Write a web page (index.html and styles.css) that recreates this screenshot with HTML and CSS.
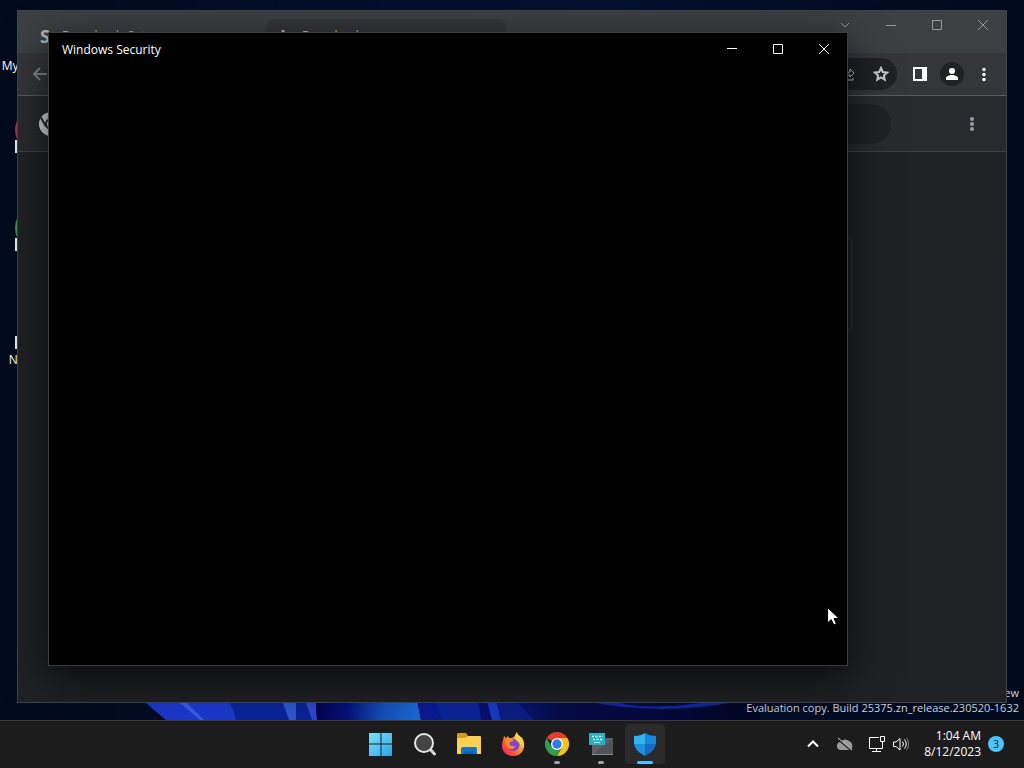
FILE: index.html
```
<!DOCTYPE html>
<html lang="en">
<head>
    <meta charset="UTF-8">
    <title>Desktop</title>
    <link rel="stylesheet" href="styles.css">
</head>
<body>
<main id="desktop">
    <svg class="wallpaper" viewBox="0 0 1024 60" preserveAspectRatio="none" aria-hidden="true">
        <defs>
            <linearGradient id="glow"><stop offset="0" stop-color="#02034c"/><stop offset="0.3" stop-color="#05107a"/><stop offset="0.65" stop-color="#1450b8"/><stop offset="1" stop-color="#1c6bd8"/></linearGradient>
            <linearGradient id="fade"><stop offset="0" stop-color="#071a86"/><stop offset="0.25" stop-color="#040c48"/><stop offset="0.7" stop-color="#030838"/><stop offset="1" stop-color="#020722"/></linearGradient>
        </defs>
        <path fill="#1c38cc" d="M100 0L146 43L166 60H240V0z"/>
        <path fill="#3a5ce0" d="M165 30L180 43L200 60H204L190 46L172 30z"/>
        <path fill="#0b2398" d="M215 20Q232 40 236 60H300V20z"/>
        <path fill="#2f55cf" d="M279 30L283 43L289 60H297L296 43V30z"/>
        <path fill="#0a2294" d="M296 30V60H312L306 30z"/>
        <path fill="#2a48cc" d="M303 30L306 43L312 60H317L315 30z"/>
        <path fill="url(#glow)" d="M315 30L317 60H421L415 30z"/>
        <path fill="#0a1a92" d="M415 30L421 60H441L433 30z"/>
        <path fill="#0b2496" d="M433 30L441 60H484L476 30z"/>
        <path fill="#06106c" d="M476 30L481 60H493L485 30z"/>
        <path fill="#1738c4" d="M484 30L492 60H501L494 30z"/>
        <path fill="url(#fade)" d="M494 30L501 60H760V30z"/>
        <path fill="#0b1d80" d="M496 40L502 60H534L516 40z"/>
        <path fill="#10269a" d="M590 42Q660 56 735 42L700 43Q650 50 620 43z"/>
    </svg>
    <ul class="shortcuts">
        <li><i class="pic"></i>My Computer</li>
        <li><i class="pic red"></i>Firefox</li>
        <li><i class="pic green"></i>Chrome</li>
        <li><i class="pic pale"></i>Notepad++</li>
    </ul>
    <p class="watermark">Windows 11 Pro Insider Preview<br>Evaluation copy. Build 25375.zn_release.230520-1632</p>

    <section class="window browser">
        <div class="tabs">
            <div class="tab"><b>S</b><span>Downloads Set</span><i>×</i></div>
            <div class="tab active"><b>L</b><span>Downloads</span><i>×</i></div>
            <button class="plus" aria-label="New tab">+</button>
            <div class="controls">
                <button aria-label="Search tabs"><svg width="12" height="12"><path d="M2 4l4 4 4-4"/></svg></button>
                <button aria-label="Minimize"><svg width="12" height="12"><path d="M1 6.500h10"/></svg></button>
                <button aria-label="Maximize"><svg width="12" height="12"><path d="M1.500 1.500h9v9h-9z"/></svg></button>
                <button aria-label="Close"><svg width="12" height="12"><path d="M1 1l10 10M11 1L1 11"/></svg></button>
            </div>
        </div>
        <div class="toolbar">
            <button aria-label="Back"><svg class="back" width="16" height="16"><path d="M15 8H2M8 2L2 8l6 6"/></svg></button>
            <div class="address">
                <button aria-label="Share"><svg width="16" height="16"><path d="M3 7v7h9v-2M5 10c0-3 2-4 4-4V3l4 4-4 4V9C7 9 6 9 5 10z"/></svg></button>
                <button aria-label="Bookmark"><svg class="star" width="16" height="16"><path d="M8 2l1.800 4 4.300.5-3.200 2.900.9 4.300L8 11.500l-3.800 2.200.9-4.300L1.900 6.500 6.200 6z"/></svg></button>
            </div>
            <button aria-label="Side panel"><svg width="16" height="16"><path class="white" fill-rule="evenodd" d="M1 1h14v14H1zM3 3v10h7V3z"/></svg></button>
            <button class="profile" aria-label="Profile"><svg width="16" height="16"><path class="white" d="M8 2a3 3 0 100 6 3 3 0 000-6zM2 14v-2c0-2 4-3 6-3s6 1 6 3v2z"/></svg></button>
            <button aria-label="Menu"><svg width="16" height="16"><g class="white"><circle cx="8" cy="3.500" r="1.700"/><circle cx="8" cy="8.500" r="1.700"/><circle cx="8" cy="13.500" r="1.700"/></g></svg></button>
        </div>
        <div class="page-head">
            <svg class="logo" width="24" height="24" viewBox="0 0 24 24"><circle cx="12" cy="12" r="12" fill="#dadce0"/><path d="M12 6.500h11M7.200 14.800L1.700 5.200M16.800 14.800L11.300 24" stroke="#292a2d" stroke-width="2"/><circle cx="12" cy="12" r="5" fill="#dadce0" stroke="#292a2d" stroke-width="2"/></svg>
            <input type="search" aria-label="Search">
            <button aria-label="More actions"><svg width="16" height="16"><g class="grey"><circle cx="8" cy="3" r="2"/><circle cx="8" cy="8" r="2"/><circle cx="8" cy="13" r="2"/></g></svg></button>
        </div>
        <div class="page-body"><div class="card"></div></div>
    </section>

    <section class="window security">
        <header>
            <h1>Windows Security</h1>
            <div class="controls">
                <button aria-label="Minimize"><svg width="12" height="12"><path d="M1 5.500h10"/></svg></button>
                <button aria-label="Maximize"><svg width="12" height="12"><path d="M1.500 1.500h9v9h-9z"/></svg></button>
                <button aria-label="Close"><svg width="12" height="12"><path d="M1 1l10 10M11 1L1 11"/></svg></button>
            </div>
        </header>
    </section>
    <svg class="cursor" width="13" height="19" aria-hidden="true"><path fill="#fff" stroke="#000" d="M.5.5V16l3.700-3.400 2.600 5.400 2.600-1.200L7 11.500h5z"/></svg>
</main>

<footer id="taskbar">
    <nav>
        <button aria-label="Start"><svg width="24" height="24"><defs><linearGradient id="win" x2="1" y2="1"><stop offset="0" stop-color="#7be3fb"/><stop offset="1" stop-color="#2aa3e8"/></linearGradient></defs><path fill="url(#win)" d="M0 1h11.500v10.500H0zM12.500 1H23v10.500H12.500zM0 12.500h11.500V24H0zM12.500 12.500H23V24H12.500z"/></svg></button>
        <button aria-label="Search"><svg width="24" height="24"><path d="M17 17l4.500 5" stroke="#d8d8d8" stroke-width="3" stroke-linecap="round"/><circle cx="11" cy="11" r="9" fill="#444" stroke="#e6e6e6" stroke-width="2"/></svg></button>
        <button aria-label="File Explorer"><svg width="26" height="24"><path fill="#d39a1c" d="M1 2q0-1 1-1h8l2 3v4H1z"/><path fill="#fcd053" d="M1 6h8l3-2h12q1 0 1 1v17H1z"/><path fill="#1374c4" d="M5 22v-5q0-2 2-2h12q2 0 2 2v5z"/><path fill="#0f62ac" d="M8 19h10v3H8z"/></svg></button>
        <button aria-label="Firefox"><svg width="24" height="24"><defs><linearGradient id="fox" x1="1" y1="0" x2="0" y2="1"><stop offset="0" stop-color="#fff04a"/><stop offset="0.45" stop-color="#ff9626"/><stop offset="0.75" stop-color="#ff4242"/><stop offset="1" stop-color="#e6237b"/></linearGradient></defs><path fill="url(#fox)" d="M16 0c0 3 3 4 5 6 5 8 1 18-9 18C3 24-1 16 2 8l1-4 2 2 2-2 1 2c3 0 4 0 5-1z"/><circle cx="12.500" cy="13" r="6" fill="#7b45d8"/><path fill="#ff8a22" d="M4 9q5-4 9 0-4 0-5 3 2 3 7 2-3 5-8 2-3-3-3-7z"/><path fill="#ffd33d" d="M16 0c0 3 3 4 5 6q3 6 1 10-3-5-7-8-2-4 1-8z"/></svg></button>
        <button class="open" aria-label="Chrome"><svg width="24" height="24"><path fill="#e33b2e" d="M12 12L1.600 6A12 12 0 0122.400 6z"/><path fill="#fbc116" d="M12 6h10.400A12 12 0 0112 24l5-9z"/><path fill="#2da04e" d="M1.600 6A12 12 0 0012 24l5.200-9L12 12 6.800 15z"/><circle cx="12" cy="12" r="6" fill="#fff"/><circle cx="12" cy="12" r="4.700" fill="#2d7de8"/></svg></button>
        <button class="open" aria-label="Remote input"><svg width="26" height="24"><path fill="#5e6267" d="M4 6h21v17H4z"/><path fill="#505358" d="M4 23L25 6v17z"/><path fill="#8a8d90" d="M4 22h21v1H4z"/><path fill="#24b0c5" d="M1 1h16v12H1z"/><path stroke="#d9fbff" stroke-width="1.500" stroke-dasharray="2 1.500" d="M4 4.500h11M5 7.500h10"/><path fill="#d9fbff" d="M6 10h6v1H6z"/></svg></button>
        <button class="open current" aria-label="Windows Security"><svg width="24" height="24"><path fill="#35b2f2" d="M12 1Q8 4 1 4v8h11z"/><path fill="#1687dc" d="M12 1q4 3 11 3v8H12z"/><path fill="#1e90e0" d="M1 12h11v12Q2 19 1 12z"/><path fill="#126cc0" d="M23 12H12v12q10-5 11-12z"/></svg></button>
    </nav>
    <div class="tray">
        <button aria-label="Show hidden icons"><svg width="16" height="16"><path d="M3 10.500l5-5 5 5" stroke-width="2"/></svg></button>
        <button aria-label="OneDrive"><svg width="18" height="16"><path fill="#9a9a9a" stroke="none" d="M5 14a4 4 0 010-8 5 5 0 018-1 5 5 0 011 9z"/><path d="M2 3l14 12" stroke="#1c1c1c" stroke-width="2"/><path d="M2 2l14 12" stroke="#ddd"/></svg></button>
        <button class="net" aria-label="Network"><svg width="18" height="18"><path d="M11 2.500H1.500v11h13V9M8.500 14v3M4 16.500h9M12.500 1.500h4v5h-4zM14.500 7v3"/></svg></button>
        <button class="sound" aria-label="Volume"><svg width="18" height="16"><path d="M1.500 6v4.500H4l4 3.500V2.500L4 6zM10.500 5.500q2 2.500 0 5M12.500 3.500q3.500 4.500 0 9"/><path stroke="#777" d="M14.500 2q4.500 6 0 12"/></svg></button>
        <time datetime="2023-08-12T01:04">1:04 AM<br>8/12/2023</time>
        <span class="count">3</span>
    </div>
</footer>
</body>
</html>
```
FILE: styles.css
```
* {
    box-sizing: border-box;
    margin: 0;
    padding: 0;
}

body {
    display: flex;
    flex-direction: column;
    height: 100vh;
    overflow: hidden;
    font: 12px/16px "Open Sans", "Noto Sans", sans-serif;
    color: #fff;
}

button {
    display: flex;
    align-items: center;
    justify-content: center;
    border: 0;
    background: none;
    color: inherit;
    font: inherit;
}

svg {
    flex: none;
    fill: none;
}

i {
    font-style: normal;
}

#desktop {
    position: relative;
    flex: 1;
    overflow: hidden;
    background: linear-gradient(90deg, #010b1c, #02102e 40%, #02112f 60%, #010a1d);
}

.wallpaper {
    position: absolute;
    left: 0;
    bottom: 0;
    width: 100%;
    height: 60px;
}

/* desktop icons */
.shortcuts {
    width: 80px;
    padding-top: 8px;
    list-style: none;
    text-align: center;
}

.shortcuts li {
    height: 98px;
    white-space: nowrap;
}

.pic {
    display: block;
    position: relative;
    width: 50px;
    height: 48px;
    margin: 0 auto 2px;
    border-radius: 50%;
}

.pic.red {
    background: #b02a4a;
}

.pic.green {
    background: #3d8a55;
}

.pic.pale {
    width: 46px;
    border-radius: 0;
    background: #777d88;
}

.pic.red::after,
.pic.green::after,
.pic.pale::after {
    content: "";
    position: absolute;
    left: 0;
    top: 34px;
    width: 13px;
    height: 13px;
    background: #e6e8ec;
}

.pic.pale::after {
    left: -2px;
}

.watermark {
    position: absolute;
    right: 5px;
    bottom: 5px;
    font-size: 11px;
    line-height: 15px;
    text-align: right;
    color: #d0d3da;
}

/* windows */
.window {
    position: absolute;
    overflow: hidden;
}

.browser {
    inset: 10px 17px 17px 17px;
    display: flex;
    flex-direction: column;
    border: 1px solid #414548;
    background: #202124;
}

.security {
    inset: 32px 176px 54px 48px;
    border: 1px solid #3c3c3c;
    background: #000;
    box-shadow: 0 12px 40px rgba(0, 0, 0, 0.7);
}

.security header {
    display: flex;
    align-items: center;
    justify-content: space-between;
    height: 32px;
    padding-left: 13px;
}

h1 {
    padding-top: 2px;
    font-size: 12px;
    font-weight: 400;
}

.controls {
    display: flex;
}

.controls button {
    width: 46px;
    height: 28px;
}

.controls svg {
    stroke: #fff;
}

.tabs {
    display: flex;
    height: 42px;
    padding-left: 8px;
    background: #3c4043;
}

.tabs .controls {
    margin-left: auto;
}

.tabs .controls svg {
    stroke: #96999b;
}

.tab {
    display: flex;
    align-items: center;
    width: 240px;
    margin-top: 8px;
    padding: 0 12px 0 14px;
    color: #b8babd;
}

.tab b {
    width: 22px;
    font-size: 18px;
}

.tab i {
    margin-left: auto;
}

.active {
    border-radius: 8px 8px 0 0;
    background: #35363a;
}

.plus {
    align-self: flex-end;
    width: 36px;
    height: 34px;
    font-size: 18px;
}

.toolbar {
    display: flex;
    align-items: center;
    height: 43px;
    padding-right: 6px;
    border-bottom: 1px solid #595b5e;
    background: #35363a;
}

.toolbar button {
    width: 32px;
    height: 32px;
}

.toolbar > button:first-child {
    width: 44px;
}

.toolbar svg {
    stroke: #c5c7ca;
}

.toolbar .star {
    stroke-width: 2;
}

.back path {
    stroke: #85888b;
    stroke-width: 2;
}

.white {
    fill: #fff;
    stroke: none;
}

.grey {
    fill: #9aa0a6;
    stroke: none;
}

.address {
    display: flex;
    flex: 1;
    justify-content: flex-end;
    margin-right: 7px;
    border-radius: 17px;
    background: #202124;
}

.toolbar .profile {
    width: 24px;
    height: 24px;
    margin: 0 4px;
    border-radius: 50%;
    background: #202124;
}

.page-head {
    display: flex;
    align-items: center;
    height: 56px;
    padding: 0 18px 0 21px;
    border-bottom: 1px solid #3e4043;
    background: #292a2d;
}

.page-head input {
    flex: 1;
    height: 40px;
    margin: 0 65px 0 120px;
    border: 0;
    border-radius: 20px;
    background: #202124;
}

.page-head button {
    width: 32px;
    height: 32px;
}

.page-body {
    flex: 1;
    padding-top: 84px;
}

.card {
    width: 680px;
    height: 96px;
    margin: 0 auto;
    border: 1px solid #34363a;
    border-radius: 4px;
}

.cursor {
    position: absolute;
    left: 827px;
    top: 607px;
}

/* taskbar */
#taskbar {
    display: grid;
    grid-template-columns: 1fr auto 1fr;
    align-items: center;
    height: 48px;
    padding-bottom: 2px;
    border-top: 1px solid #38393b;
    background: #1c1c1c;
}

nav {
    display: flex;
    grid-column: 2;
    gap: 4px;
    padding-left: 2px;
}

nav button {
    position: relative;
    width: 40px;
    height: 40px;
    border-radius: 4px;
}

.open::after {
    content: "";
    position: absolute;
    bottom: 0;
    width: 6px;
    height: 3px;
    border-radius: 2px;
    background: #a0a0a0;
}

.current {
    background: #2a2a2a;
}

.current::after {
    width: 16px;
    background: #4cc2ff;
}

.tray {
    display: flex;
    align-items: center;
    justify-content: flex-end;
    padding-right: 20px;
}

.tray button {
    width: 32px;
    height: 32px;
}

.tray button.sound,
.tray button.net {
    width: 24px;
}

.tray button.net {
    margin-left: 4px;
}

.tray svg {
    stroke: #fff;
}

time {
    width: 68px;
    text-align: right;
}

.count {
    width: 16px;
    height: 16px;
    margin-left: 7px;
    border-radius: 50%;
    background: #4cc2ff;
    color: #10212c;
    font-size: 10px;
    text-align: center;
}
```
